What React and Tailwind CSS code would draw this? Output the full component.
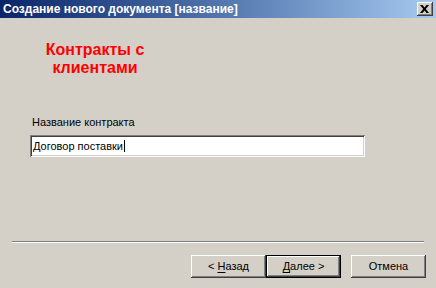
export default function App() {
  const raised =
    'shadow-[inset_-1px_-1px_0_#404040,inset_1px_1px_0_#ffffff,inset_-2px_-2px_0_#808080,inset_2px_2px_0_#d4d0c8]'
  return (
    <div className="w-[436px] h-[288px] bg-[#d4d0c8] flex flex-col font-['Liberation_Sans',Arial,sans-serif] text-black overflow-hidden">
      <div className="h-[18px] flex items-center pl-[3px] pr-[3px] bg-gradient-to-r from-[#0a246a] to-[#a6caf0]">
        <span className="text-white font-bold text-[12px] leading-none">
          Создание нового документа [название]
        </span>
        <div className={`ml-auto w-[16px] h-[14px] bg-[#d4d0c8] flex items-center justify-center ${raised}`}>
          <svg width="9" height="8" viewBox="0 0 9 8" className="mr-[1px]">
            <path d="M0 0h2.5l2 2.6L6.5 0H9L5.8 4 9 8H6.5l-2-2.6L2.5 8H0l3.2-4z" fill="#000" />
          </svg>
        </div>
      </div>

      <div className="w-[190px] mt-[23px] text-center text-[#ff0000] font-bold text-[16px] leading-[18px]">
        Контракты с
        <br />
        клиентами
      </div>

      <div className="ml-[32px] mt-[38px] text-[11px] leading-[14px]">Название контракта</div>

      <div className="ml-[30px] mt-[6px] w-[335px] h-[22px] bg-white shadow-[inset_1px_1px_0_#808080,inset_-1px_-1px_0_#ffffff,inset_2px_2px_0_#404040,inset_-2px_-2px_0_#d4d0c8] flex items-center pl-[3px]">
        <span className="text-[11px] leading-none">Договор поставки</span>
        <span className="w-[1px] h-[12px] bg-black ml-[1px]" />
      </div>

      <div className="mx-[12px] mt-[84px] h-[2px] border-t border-[#808080] border-b border-b-white" />

      <div className="flex justify-end mr-[10px] mt-[12px]">
        <button className={`w-[75px] h-[23px] bg-[#d4d0c8] text-[11px] ${raised}`}>
          &lt; <span className="underline underline-offset-2">Н</span>азад
        </button>
        <button className="w-[75px] h-[23px] bg-[#d4d0c8] text-[11px] border border-black shadow-[inset_-1px_-1px_0_#404040,inset_1px_1px_0_#ffffff,inset_-2px_-2px_0_#808080,inset_2px_2px_0_#d4d0c8]">
          <span className="underline underline-offset-2">Д</span>алее &gt;
        </button>
        <button className={`ml-[10px] w-[75px] h-[23px] bg-[#d4d0c8] text-[11px] ${raised}`}>Отмена</button>
      </div>
    </div>
  )
}
